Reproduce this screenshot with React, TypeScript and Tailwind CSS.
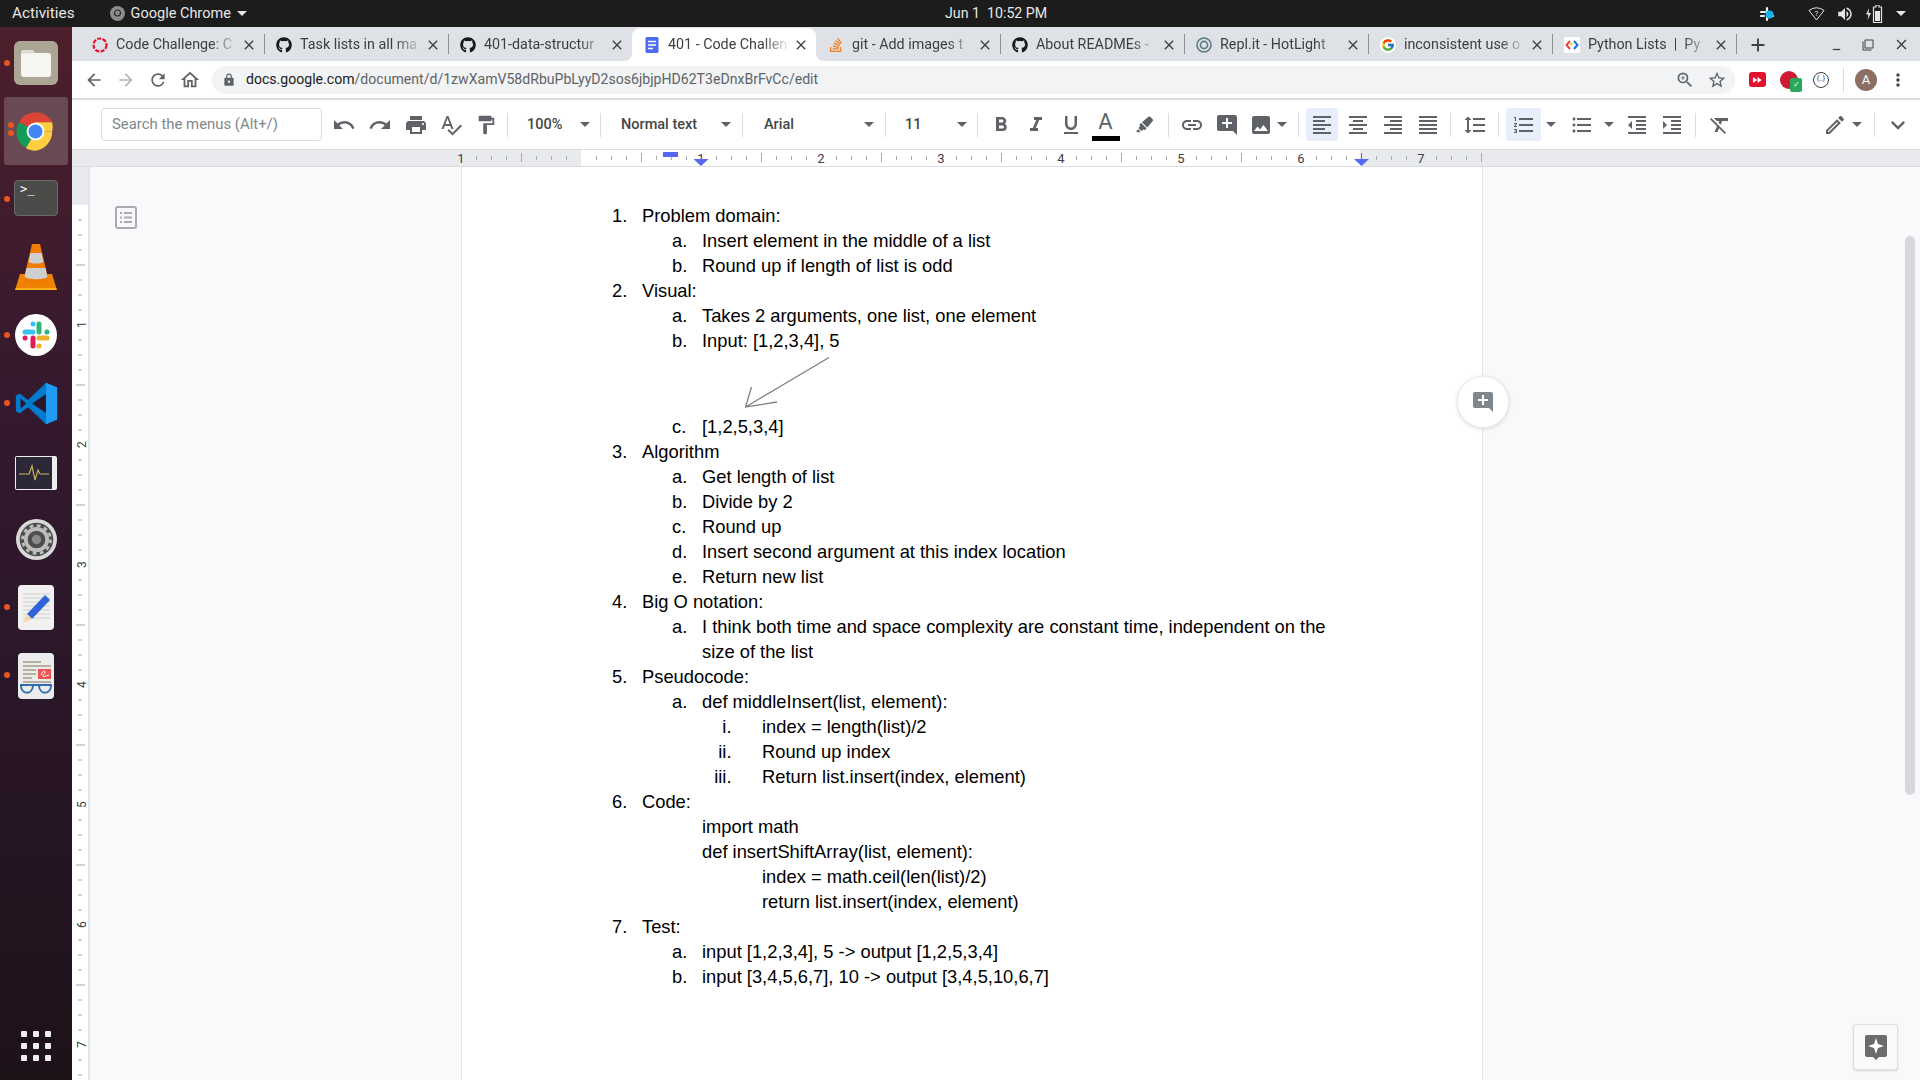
import {
  MdArrowBack, MdArrowForward, MdRefresh, MdOutlineHome, MdLock, MdOutlineZoomIn, MdStarBorder, MdMoreVert,
  MdUndo, MdRedo, MdPrint, MdSpellcheck, MdFormatPaint, MdFormatBold, MdFormatItalic, MdFormatUnderlined,
  MdLink, MdAddComment, MdImage, MdFormatAlignLeft, MdFormatAlignCenter, MdFormatAlignRight,
  MdFormatAlignJustify, MdFormatLineSpacing, MdFormatListNumbered, MdFormatListBulleted, MdFormatIndentDecrease,
  MdFormatIndentIncrease, MdFormatClear, MdOutlineEdit, MdExpandMore, MdClose, MdAdd, MdMinimize, MdFilterNone,
  MdVolumeUp, MdFastForward,
} from "react-icons/md";
import { FaGithub, FaStackOverflow, FaHighlighter } from "react-icons/fa";
import { FcGoogle } from "react-icons/fc";
import type { ReactNode } from "react";

const UI = "font-['Roboto','Noto_Sans',sans-serif]";

function DocsFav() {
  return (
    <svg width="16" height="16" viewBox="0 0 16 16">
      <rect x="1.5" width="13" height="16" rx="1.5" fill="#4d6bf0" />
      <path d="M4 4.5h8M4 8h8M4 11.5h5" stroke="#fff" strokeWidth="1.5" />
    </svg>
  );
}

function CodeChallengeFav() {
  return (
    <svg width="16" height="16" viewBox="0 0 16 16">
      <circle cx="8" cy="8" r="6.5" fill="none" stroke="#e0142c" strokeWidth="2.2" strokeDasharray="4 1.4" />
    </svg>
  );
}

function ReplFav() {
  return (
    <svg width="16" height="16" viewBox="0 0 16 16" fill="none">
      <circle cx="8" cy="8" r="7" stroke="#5d7a84" strokeWidth="1.6" />
      <circle cx="8" cy="8" r="3.6" stroke="#5d7a84" strokeWidth="1.6" />
    </svg>
  );
}

function PyFav() {
  return (
    <span className="flex h-4 w-4 items-center justify-center rounded-[2px] bg-white">
      <svg width="14" height="10" viewBox="0 0 14 10" fill="none" strokeWidth="2">
        <path d="M5 1 1.5 5 5 9" stroke="#ea4335" />
        <path d="M9 1l3.5 4L9 9" stroke="#1a73e8" />
        <path d="M7 3.5 5.5 5" stroke="#fbbc04" />
      </svg>
    </span>
  );
}

const TABS: { title: string; icon: ReactNode; active?: boolean; sep?: boolean }[] = [
  { title: "Code Challenge: C", icon: <CodeChallengeFav />, sep: true },
  { title: "Task lists in all ma", icon: <FaGithub size={16} color="#16181a" />, sep: true },
  { title: "401-data-structur", icon: <FaGithub size={16} color="#16181a" /> },
  { title: "401 - Code Challen", icon: <DocsFav />, active: true },
  { title: "git - Add images t", icon: <FaStackOverflow size={16} color="#f48024" />, sep: true },
  { title: "About READMEs -", icon: <FaGithub size={16} color="#16181a" />, sep: true },
  { title: "Repl.it - HotLight", icon: <ReplFav />, sep: true },
  { title: "inconsistent use o", icon: <span className="flex h-4 w-4 items-center justify-center rounded-full bg-white"><FcGoogle size={14} /></span>, sep: true },
  { title: "Python Lists  |  Py", icon: <PyFav />, sep: true },
];

function Tab({ title, icon, active, sep }: (typeof TABS)[number]) {
  return (
    <div className={`relative flex h-full w-[184px] shrink-0 items-center pl-3 ${active ? "rounded-t-[8px] bg-white" : ""}`}>
      {active && (
        <>
          <span className="absolute bottom-0 -left-2 h-2 w-2 bg-white"><span className="block h-2 w-2 rounded-br-[8px] bg-[#dee1e6]" /></span>
          <span className="absolute -right-2 bottom-0 h-2 w-2 bg-white"><span className="block h-2 w-2 rounded-bl-[8px] bg-[#dee1e6]" /></span>
        </>
      )}
      <span className="flex w-4 shrink-0 items-center justify-center">{icon}</span>
      <span className="ml-2 w-[122px] shrink-0 whitespace-pre text-[14.3px] text-[#3c4043] [mask-image:linear-gradient(to_right,black_78%,transparent_100%)]">
        {title}
      </span>
      <MdClose size={16} className="ml-[3px] text-[#3c4043]" />
      {sep && <span className="absolute top-[6px] -right-px h-5 w-px bg-[#8d9094]" />}
    </div>
  );
}

function Caret({ className = "" }: { className?: string }) {
  return <span className={`h-0 w-0 shrink-0 border-x-[5px] border-t-[5px] border-x-transparent border-t-[#5f6368] ${className}`} />;
}

function Sep({ className = "" }: { className?: string }) {
  return <span className={`h-[24px] w-px shrink-0 bg-[#dadce0] ${className}`} />;
}

function Btn({ children, className = "w-[35px]" }: { children: ReactNode; className?: string }) {
  return <span className={`flex h-[33px] shrink-0 items-center justify-center text-[#5f6368] ${className}`}>{children}</span>;
}

function TopBar() {
  return (
    <div className={`flex h-[27px] shrink-0 items-center bg-[#1c1c1c] text-[14.5px] text-[#e6e6e6] ${UI}`}>
      <div className="flex w-[945px] shrink-0 items-center">
        <span className="ml-3 text-[15.3px]">Activities</span>
        <svg className="ml-[35px]" width="15" height="15" viewBox="0 0 15 15">
          <circle cx="7.5" cy="7.5" r="7.5" fill="#8c8c8c" />
          <circle cx="7.5" cy="7" r="3" fill="none" stroke="#2b2b2b" strokeWidth="1.2" />
        </svg>
        <span className="ml-[6px]">Google Chrome</span>
        <Caret className="ml-[6px] border-t-[#e6e6e6]" />
      </div>
      <span className="whitespace-pre text-[14.2px]">Jun 1  10:52 PM</span>
      <div className="ml-auto flex items-center pr-[14px]">
        <svg width="16" height="16" viewBox="0 0 16 16" className="mr-[33px]">
          <path d="M2 6h4M8 2v4M10 10h4M8 10v4M2 10h3" stroke="#eee" strokeWidth="2.2" strokeLinecap="round" />
          <circle cx="10.5" cy="8.5" r="4" fill="#17b3e8" />
        </svg>
        <svg width="17" height="15" viewBox="0 0 17 15" fill="none" stroke="#e6e6e6" className="mr-[11px]">
          <path d="M1 4.500Q8.500-1 16 4.500L8.500 14z" />
          <text x="8.500" y="10" textAnchor="middle" fontSize="8" fill="#e6e6e6" stroke="none">?</text>
        </svg>
        <MdVolumeUp size={18} className="mr-[11px]" />
        <svg width="20" height="18" viewBox="0 0 20 18" className="mr-[11px]">
          <path d="M4 3 1 9.500h2.500L2.500 15 6 8H3.500z" fill="#e6e6e6" />
          <path d="M11 0h3v2h2.500v15.500h-8V2H11z" fill="none" stroke="#e6e6e6" strokeWidth="1.2" />
          <rect x="10" y="6" width="5" height="10" fill="#e6e6e6" />
        </svg>
        <Caret className="border-t-[#e6e6e6]" />
      </div>
    </div>
  );
}

function Dot({ className }: { className: string }) {
  return <span className={`absolute left-[4px] h-[6px] w-[6px] rounded-full bg-[#e95420] ${className}`} />;
}

function DockItem({ children, active, dots }: { children: ReactNode; active?: boolean; dots?: number }) {
  return (
    <div className={`relative flex h-[68px] shrink-0 items-center justify-center ${active ? "mx-[4px] rounded-[3px] bg-[#6a4a52]" : ""}`}>
      {dots === 1 && <Dot className="top-[31px]" />}
      {dots === 2 && (
        <>
          <Dot className="top-[25px] -left-0" />
          <Dot className="top-[33px] -left-0" />
        </>
      )}
      {children}
    </div>
  );
}

function Dock() {
  return (
    <div className="flex w-[72px] shrink-0 flex-col bg-[linear-gradient(180deg,#4d1f2c_0%,#35192e_35%,#2b172a_60%,#1e1219_100%)] pt-[2px]">
      <DockItem dots={1}>
        <div className="flex h-[44px] w-[44px] items-center justify-center rounded-[6px] bg-[#aba593]">
          <svg width="32" height="28" viewBox="0 0 32 28">
            <path d="M1 4a3 3 0 0 1 3-3h8l3 3h13a3 3 0 0 1 3 3v18a3 3 0 0 1-3 3H4a3 3 0 0 1-3-3z" fill="#f6f5f1" />
            <path d="M1 4a3 3 0 0 1 3-3h8l3 3-14 1z" fill="#dfdbd0" />
          </svg>
        </div>
      </DockItem>
      <DockItem active dots={2}>
        <svg width="45" height="45" viewBox="0 0 48 48" className="-ml-[1px]">
          <path d="M24 24 6.5 14A20.500 20.500 0 0 1 24 3.500 20.500 20.500 0 0 1 41.800 14H24z" fill="#db4437" />
          <path d="M24 24 13.800 41.800A20.500 20.500 0 0 1 6.500 14z" fill="#0f9d58" />
          <path d="M24 24h17.800A20.500 20.500 0 0 1 24 44.500c-3.700 0-7.200-1-10.200-2.700z" fill="#ffcd40" />
          <path d="M24 24h17.800A20.500 20.500 0 0 0 41.800 14H24z" fill="#ffcd40" />
          <circle cx="24" cy="24" r="9.500" fill="#fff" />
          <circle cx="24" cy="24" r="7.500" fill="#4285f4" />
        </svg>
      </DockItem>
      <DockItem dots={1}>
        <div className="-mt-[2px] h-[36px] w-[44px] rounded-[4px] border border-[#6a6a68] bg-[#4b4b49] pl-[5px] font-['DejaVu_Sans_Mono',monospace] text-[12px] leading-[16px] text-white">
          &gt;_
        </div>
      </DockItem>
      <DockItem>
        <svg width="42" height="46" viewBox="0 0 42 46">
          <path d="M5 30h32l5 16H0z" fill="#f08300" />
          <path d="M1 44h40l1 2H0z" fill="#ffb31a" />
          <path d="M17 0h8l9 38c-3 4-23 4-26 0z" fill="#f07c00" />
          <path d="M15.500 9h11l2 9c-3 2-12 2-15 0zM11.500 24h19l2 9c-4 3-19 3-23 0z" fill="#cfcfcf" />
        </svg>
      </DockItem>
      <DockItem dots={1}>
        <div className="flex h-[42px] w-[42px] items-center justify-center rounded-full bg-white">
          <svg width="28" height="28" viewBox="0 0 28 28" strokeLinecap="round" strokeWidth="5" fill="none">
            <path d="M3 11h8M11 3v.1" stroke="#36c5f0" />
            <path d="M17 3v8M25 11h-.1" stroke="#2eb67d" />
            <path d="M25 17h-8M17 25h.1" stroke="#ecb22e" />
            <path d="M11 25v-8M3 17h.1" stroke="#e01e5a" />
          </svg>
        </div>
      </DockItem>
      <DockItem dots={1}>
        <svg width="43" height="43" viewBox="0 0 100 100">
          <path d="M72 2 30 42 11 27 2 32v36l9 5 19-15 42 40 26-11V13z" fill="#007acc" />
          <path d="M72 2l26 11v74l-26 11z" fill="#1f9cf0" />
          <path d="M72 28 40 50l32 22z" fill="#2b1729" />
          <path d="M13 38v24l13-12z" fill="#2b1729" />
        </svg>
      </DockItem>
      <DockItem>
        <div className="mt-[3px] flex h-[34px] w-[42px] rounded-[2px] bg-[#eeeeee] p-[1px]">
          <svg width="36" height="32" viewBox="0 0 36 32">
            <rect width="36" height="32" fill="#2c2838" />
            <path d="M3 17h10l3-8 3 14 3-10 2 4h9" fill="none" stroke="#c9b458" strokeWidth="1.2" />
          </svg>
        </div>
      </DockItem>
      <DockItem>
        <svg width="45" height="41" viewBox="0 0 44 44">
          <circle cx="22" cy="22" r="22" fill="#d9d9d9" />
          <circle cx="22" cy="22" r="18" fill="#4d4d4d" />
          <circle cx="22" cy="22" r="11.500" fill="none" stroke="#bdbdbd" strokeWidth="4" />
          <circle cx="22" cy="22" r="15" fill="none" stroke="#bdbdbd" strokeWidth="3" strokeDasharray="4 3.850" />
          <circle cx="22" cy="22" r="5" fill="#8a8a8a" />
        </svg>
      </DockItem>
      <DockItem dots={1}>
        <svg width="36" height="45" viewBox="0 0 36 45">
          <rect width="36" height="45" rx="4" fill="#f1f1f1" />
          <path d="M5 9h27M5 13h27M5 17h27M5 21h27M5 25h27M5 29h27M5 33h27" stroke="#cfcfcf" strokeWidth="1" />
          <path d="M27 10l5 5-18 19-5-5z" fill="#2f63d8" />
          <path d="M9 29l5 5-9 4z" fill="#f6d7a8" />
        </svg>
      </DockItem>
      <DockItem dots={1}>
        <svg width="36" height="46" viewBox="0 0 36 46" className="mt-[1px]">
          <rect width="36" height="46" rx="4" fill="#ececec" />
          <path d="M5 9h18M5 13h28M5 17h13M5 21h13M5 25h9M5 29h28" stroke="#b7b09e" strokeWidth="2" />
          <rect x="20" y="16" width="13" height="10" fill="#ef5350" />
          <path d="M23 22c2-6 6-4 3-1s0 3 5 1" fill="none" stroke="#fff" />
          <path d="M2 32h32M3 32c0 10 11 10 12 1M21 33c1 9 12 9 12-1" fill="none" stroke="#2f6db5" strokeWidth="2" />
        </svg>
      </DockItem>
      <div className="mt-auto grid h-[68px] grid-cols-[6px_6px_6px] content-center justify-center gap-[6px]">
        {Array.from({ length: 9 }).map((_, i) => (
          <span key={i} className="h-[6px] w-[6px] rounded-[1px] bg-[#eeeeee]" />
        ))}
      </div>
    </div>
  );
}

function TabStrip() {
  return (
    <div className="flex h-[34px] shrink-0 items-end bg-[#dee1e6] pl-2">
      <div className="flex h-[33px] items-center">
        {TABS.map((t) => (
          <Tab key={t.title} {...t} />
        ))}
      </div>
      <div className="flex h-[33px] flex-1 items-center text-[#3c4043]">
        <MdAdd size={22} className="ml-[11px]" />
        <span className="ml-auto flex w-[32px] justify-center"><MdMinimize size={15} /></span>
        <span className="flex w-[32px] justify-center"><MdFilterNone size={12} /></span>
        <span className="mr-[2px] flex w-[34px] justify-center"><MdClose size={17} /></span>
      </div>
    </div>
  );
}

function AddressBar() {
  return (
    <div className="flex h-[37px] shrink-0 items-center bg-white pl-[6px] text-[#5f6368]">
      <span className="flex w-8 justify-center"><MdArrowBack size={20} /></span>
      <span className="flex w-8 justify-center text-[#b4b7bb]"><MdArrowForward size={20} /></span>
      <span className="flex w-8 justify-center"><MdRefresh size={20} /></span>
      <span className="flex w-8 justify-center"><MdOutlineHome size={22} /></span>
      <div className="ml-[6px] flex h-7 w-[1523px] shrink-0 items-center rounded-full bg-[#f1f3f4] pl-[10px] pr-[6px]">
        <MdLock size={14} />
        <span className="ml-[10px] text-[14.08px]">
          <span className="text-[#202124]">docs.google.com</span>/document/d/1zwXamV58dRbuPbLyyD2sos6jbjpHD62T3eDnxBrFvCc/edit
        </span>
        <MdOutlineZoomIn size={20} className="ml-auto mr-[12px]" />
        <MdStarBorder size={20} className="mr-[2px]" />
      </div>
      <span className="ml-[6px] flex w-8 justify-center">
        <span className="flex h-[15px] w-[17px] items-center justify-center rounded-[3px] bg-[#e0122d] text-white"><MdFastForward size={12} /></span>
      </span>
      <span className="relative flex w-8 justify-center">
        <span className="h-[18px] w-[18px] rounded-full bg-[#cf1b38]" />
        <span className="absolute top-[7px] left-[17px] flex h-[14px] w-[12px] items-center justify-center rounded-[2px] bg-[#27a85a] text-[8px] leading-none text-white">✓</span>
      </span>
      <span className="flex w-8 justify-center">
        <span className="flex h-4 w-4 items-center justify-center rounded-full border border-[#3c4043] text-[7px] leading-none text-[#3c4043]">{"{..}"}</span>
      </span>
      <span className="ml-[6px] h-6 w-px bg-[#dadce0]" />
      <span className={`ml-[11px] flex h-[22px] w-[22px] items-center justify-center rounded-full bg-[#8d6e63] text-[13px] text-white ${UI}`}>A</span>
      <MdMoreVert size={20} className="ml-[11px] text-[#3c4043]" />
    </div>
  );
}

function Toolbar() {
  const on = "rounded-[3px] bg-[#e8eefc] text-[#4a5cf0]";
  return (
    <div className={`flex h-[51px] shrink-0 items-center border-t-2 border-[#dadce0] bg-white pl-[29px] text-[14.5px] font-medium text-[#444746] ${UI}`}>
      <div className="flex h-[33px] w-[221px] shrink-0 items-center rounded-[4px] border border-[#dadce0] pl-[10px] text-[14.9px] font-normal text-[#80868b]">
        Search the menus (Alt+/)
      </div>
      <Btn className="ml-[4px] w-[36px]"><MdUndo size={24} /></Btn>
      <Btn className="w-[36px]"><MdRedo size={24} /></Btn>
      <Btn><MdPrint size={24} /></Btn>
      <Btn><MdSpellcheck size={24} /></Btn>
      <Btn><MdFormatPaint size={22} /></Btn>
      <Sep className="ml-[4px]" />
      <span className="ml-[19px] w-[36px] shrink-0">100%</span>
      <Caret className="ml-[17px]" />
      <Sep className="ml-[10px]" />
      <span className="ml-[20px] w-[78px] shrink-0 whitespace-nowrap">Normal text</span>
      <Caret className="ml-[22px]" />
      <Sep className="ml-[11px]" />
      <span className="ml-[21px] w-[100px] shrink-0">Arial</span>
      <Caret />
      <Sep className="ml-[11px]" />
      <span className="ml-[19px] w-[52px] shrink-0">11</span>
      <Caret />
      <Sep className="ml-[10px]" />
      <Btn className="ml-[5px] w-[35px]"><MdFormatBold size={24} /></Btn>
      <Btn><MdFormatItalic size={24} /></Btn>
      <Btn><MdFormatUnderlined size={24} /></Btn>
      <Btn>
        <span className="relative flex h-[33px] w-[28px] flex-col items-center">
          <span className="mt-[2px] text-[22px] font-normal leading-[24px] text-[#5f6368]">A</span>
          <span className="absolute bottom-0 h-[5px] w-[28px] bg-black" />
        </span>
      </Btn>
      <Btn className="ml-[4px] w-[35px]"><FaHighlighter size={17} /></Btn>
      <Sep className="ml-[6px]" />
      <Btn className="ml-[5px] w-[35px]"><MdLink size={24} /></Btn>
      <Btn><MdAddComment size={24} /></Btn>
      <Btn className="w-[33px]"><MdImage size={24} /></Btn>
      <Caret />
      <Sep className="ml-[11px]" />
      <Btn className={`ml-[7px] w-[32px] ${on}`}><MdFormatAlignLeft size={24} /></Btn>
      <Btn className="ml-[2px] w-[35px]"><MdFormatAlignCenter size={24} /></Btn>
      <Btn><MdFormatAlignRight size={24} /></Btn>
      <Btn><MdFormatAlignJustify size={24} /></Btn>
      <Sep className="ml-[5px]" />
      <Btn className="ml-[6px] w-[35px]"><MdFormatLineSpacing size={24} /></Btn>
      <Sep className="ml-[6px]" />
      <Btn className={`ml-[7px] w-[35px] ${on}`}><MdFormatListNumbered size={24} /></Btn>
      <Caret className="ml-[5px]" />
      <Btn className="ml-[8px] w-[35px]"><MdFormatListBulleted size={24} /></Btn>
      <Caret className="ml-[5px]" />
      <Btn className="ml-[5px] w-[35px]"><MdFormatIndentDecrease size={24} /></Btn>
      <Btn><MdFormatIndentIncrease size={24} /></Btn>
      <Sep className="ml-[6px]" />
      <Btn className="ml-[6px] w-[35px]"><MdFormatClear size={24} /></Btn>
      <Btn className="ml-[80px] w-[35px]"><MdOutlineEdit size={24} /></Btn>
      <Caret />
      <Sep className="ml-[12px]" />
      <Btn className="ml-[5px] w-[35px]"><MdExpandMore size={28} /></Btn>
    </div>
  );
}

function HRuler() {
  const ticks = Array.from({ length: 69 }, (_, i) => i - 8);
  return (
    <div className="relative flex h-[18px] shrink-0 border-y border-[#dadce0] bg-[#e8eaed]">
      <span className="ml-[509px] h-full w-[779px] bg-white" />
      <svg className="absolute top-[-1px] left-0" width="1848" height="18">
        {ticks.map((k) => {
          const x = 509 + k * 15;
          if (k % 8 === 0 && k !== 0) {
            return (
              <text key={k} x={x} y="13.500" textAnchor="middle" fontSize="13" fontFamily="Roboto, sans-serif" fill="#3c4043">
                {Math.abs(k / 8)}
              </text>
            );
          }
          if (k === 0) return null;
          return k % 4 === 0
            ? <rect key={k} x={x} y="4" width="1" height="9" fill="#a6a9ad" />
            : <rect key={k} x={x} y="7" width="1" height="4" fill="#a6a9ad" />;
        })}
        <rect x="591" y="3" width="15" height="5" fill="#5468f2" />
        <path d="M621.500 10h15l-7.500 7z" fill="#5468f2" />
        <rect x="1289" y="4" width="1" height="6" fill="#5468f2" />
        <path d="M1282 10h15l-7.500 7z" fill="#5468f2" />
      </svg>
    </div>
  );
}

function VRuler() {
  const ticks = Array.from({ length: 60 }, (_, i) => i + 1);
  return (
    <div className="relative w-[18px] shrink-0 border-r-2 border-[#e3e5e8] bg-white">
      <div className="h-[38px] bg-[#e8eaed]" />
      <svg className="absolute top-0 left-0" width="16" height="913">
        {ticks.map((k) => {
          const y = 37.500 + k * 15;
          if (k % 8 === 0) {
            return (
              <text key={k} transform={`translate(14 ${y}) rotate(-90)`} textAnchor="middle" fontSize="12" fontFamily="Roboto, sans-serif" fill="#3c4043">
                {k / 8}
              </text>
            );
          }
          return k % 4 === 0
            ? <rect key={k} x="4" y={y} width="9" height="1" fill="#a6a9ad" />
            : <rect key={k} x="6" y={y} width="4" height="1" fill="#a6a9ad" />;
        })}
      </svg>
    </div>
  );
}

type Kind = "l0" | "l1" | "l2" | "c1" | "c2";

const LINES: { kind: Kind; marker?: string; text: string }[] = [
  { kind: "l0", marker: "1.", text: "Problem domain:" },
  { kind: "l1", marker: "a.", text: "Insert element in the middle of a list" },
  { kind: "l1", marker: "b.", text: "Round up if length of list is odd" },
  { kind: "l0", marker: "2.", text: "Visual:" },
  { kind: "l1", marker: "a.", text: "Takes 2 arguments, one list, one element" },
  { kind: "l1", marker: "b.", text: "Input: [1,2,3,4], 5" },
  { kind: "l1", marker: "c.", text: "[1,2,5,3,4]" },
  { kind: "l0", marker: "3.", text: "Algorithm" },
  { kind: "l1", marker: "a.", text: "Get length of list" },
  { kind: "l1", marker: "b.", text: "Divide by 2" },
  { kind: "l1", marker: "c.", text: "Round up" },
  { kind: "l1", marker: "d.", text: "Insert second argument at this index location" },
  { kind: "l1", marker: "e.", text: "Return new list" },
  { kind: "l0", marker: "4.", text: "Big O notation:" },
  { kind: "l1", marker: "a.", text: "I think both time and space complexity are constant time, independent on the" },
  { kind: "c1", text: "size of the list" },
  { kind: "l0", marker: "5.", text: "Pseudocode:" },
  { kind: "l1", marker: "a.", text: "def middleInsert(list, element):" },
  { kind: "l2", marker: "i.", text: "index = length(list)/2" },
  { kind: "l2", marker: "ii.", text: "Round up index" },
  { kind: "l2", marker: "iii.", text: "Return list.insert(index, element)" },
  { kind: "l0", marker: "6.", text: "Code:" },
  { kind: "c1", text: "import math" },
  { kind: "c1", text: "def insertShiftArray(list, element):" },
  { kind: "c2", text: "index = math.ceil(len(list)/2)" },
  { kind: "c2", text: "return list.insert(index, element)" },
  { kind: "l0", marker: "7.", text: "Test:" },
  { kind: "l1", marker: "a.", text: "input [1,2,3,4], 5 -> output [1,2,5,3,4]" },
  { kind: "l1", marker: "b.", text: "input [3,4,5,6,7], 10 -> output [3,4,5,10,6,7]" },
];

function Line({ kind, marker, text }: (typeof LINES)[number]) {
  return (
    <div className="flex h-[25px] whitespace-pre leading-[25px]">
      {kind === "l0" && <span className="ml-[150px] w-[30px]">{marker}</span>}
      {kind === "l1" && <span className="ml-[210px] w-[30px]">{marker}</span>}
      {kind === "l2" && <span className="ml-[238px] w-[62px] pr-[30.500px] text-right">{marker}</span>}
      {kind === "c1" && <span className="ml-[240px]" />}
      {kind === "c2" && <span className="ml-[300px]" />}
      <span>{text}</span>
    </div>
  );
}

function Page() {
  return (
    <div className="relative w-[1022px] shrink-0 border-x border-[#e3e5e8] bg-white pt-[36px] font-['Liberation_Sans',Arial,sans-serif] text-[18.330px] text-black">
      {LINES.map((l, i) => (
        <div key={i}>
          <Line {...l} />
          {i === 5 && (
            <div className="h-[61px]">
              <svg width="100" height="61" viewBox="0 0 100 61" className="ml-[278px]" fill="none" stroke="#808080" strokeWidth="1.300">
                <path d="M89 4.500 5.500 54M11.500 34 5.500 54 37 49" />
              </svg>
            </div>
          )}
        </div>
      ))}
      <div className="absolute top-[209px] -right-[27px] z-10 flex h-[52px] w-[52px] items-center justify-center rounded-full border border-[#eeeeee] bg-white shadow-[0_1px_4px_rgba(0,0,0,0.15)]">
        <MdAddComment size={24} className="text-[#80868b]" />
      </div>
    </div>
  );
}

function DocArea() {
  return (
    <div className="relative flex min-h-0 flex-1 overflow-hidden bg-[#f8f9fa]">
      <VRuler />
      <div className="w-[371px] shrink-0 pt-[39px] pl-[25px]">
        <svg width="22" height="23" viewBox="0 0 22 23" fill="none" stroke="#a9abae">
          <rect x="1" y="1" width="20" height="21" rx="2" strokeWidth="2" />
          <path d="M5 7h2M9 7h8M5 11.500h2M9 11.500h8M5 16h2M9 16h8" strokeWidth="2" />
        </svg>
      </div>
      <Page />
      <div className="flex flex-1 justify-end pt-[69px] pr-[5px]">
        <div className="h-[559px] w-[10px] rounded-full bg-[#d5d7dc]" />
      </div>
      <div className="absolute top-[857px] right-[22px] flex h-[46px] w-[45px] items-center justify-center rounded-[3px] border border-[#e0e0e0] bg-[#f8f9fa] shadow-[0_1px_2px_rgba(0,0,0,0.15)]">
        <svg width="24" height="26" viewBox="0 0 24 26">
          <path d="M3 1h18a2 2 0 0 1 2 2v18a2 2 0 0 1-2 2h-6l-3 3-3-3H3a2 2 0 0 1-2-2V3a2 2 0 0 1 2-2z" fill="#6b6b6b" />
          <path d="M12 4l2 6 6 2-6 2-2 6-2-6-6-2 6-2z" fill="#fff" />
        </svg>
      </div>
    </div>
  );
}

export default function App() {
  return (
    <div className={`flex h-[1080px] w-[1920px] flex-col overflow-hidden ${UI}`}>
      <TopBar />
      <div className="flex min-h-0 flex-1">
        <Dock />
        <div className="flex min-w-0 flex-1 flex-col">
          <TabStrip />
          <AddressBar />
          <Toolbar />
          <HRuler />
          <DocArea />
        </div>
      </div>
    </div>
  );
}
